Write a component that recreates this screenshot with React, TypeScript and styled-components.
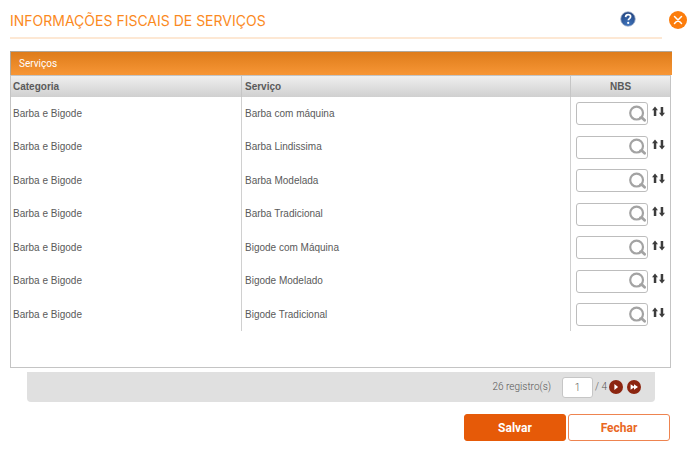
import React from "react";
import styled, { createGlobalStyle } from "styled-components";

const GlobalStyle = createGlobalStyle`
  * { box-sizing: border-box; }
  body { margin: 0; background: #fff; font-family: "Liberation Sans", Arial, sans-serif; }
`;

const Page = styled.main`
  padding: 9px 0 20px 10px;
`;

const Header = styled.header`
  display: flex;
  align-items: flex-start;
  gap: 7px;
  padding-right: 1px;
`;

const TitleBar = styled.div`
  flex: 1;
  display: flex;
  justify-content: space-between;
  align-items: flex-start;
  height: 30px;
  padding-right: 26px;
  border-bottom: 2px solid #fde8d4;
`;

const Title = styled.h1`
  margin: 0;
  font: 400 14px/24px Inter, sans-serif;
  color: #fb8a1e;
  white-space: nowrap;
`;

const IconButton = styled.button<{ $size: number }>`
  display: block;
  flex: none;
  width: ${(p) => p.$size}px;
  height: ${(p) => p.$size}px;
  padding: 0;
  border: 0;
  background: none;
  cursor: pointer;

  svg { display: block; width: 100%; height: 100%; }
`;

const HeaderButton = styled(IconButton)`
  margin-top: 2px;
`;

const Content = styled.section`
  margin: 12px 16px 0 0;
`;

const Caption = styled.h2`
  height: 24px;
  margin: 0;
  padding: 1px 8px 0;
  border: solid #b0a89c;
  border-width: 1px 0 0 1px;
  background: linear-gradient(#de7c1a, #f79636);
  color: #fff;
  font: 400 10px/22px Roboto, sans-serif;
`;

const Frame = styled.div`
  min-height: 293px;
  margin-right: 1px;
  border: 1px solid #c4c4c4;
`;

const Table = styled.table`
  width: 100%;
  border-collapse: separate;
  border-spacing: 0;
  table-layout: fixed;
  color: #5a5a5a;
  font-size: 10px;
`;

const HeadCell = styled.th<{ $width?: number; $center?: boolean }>`
  width: ${(p) => (p.$width ? `${p.$width}px` : "auto")};
  height: 21px;
  padding: 0 3px;
  border-right: 1px solid #c6c6c6;
  background: linear-gradient(#efefef, #d0d0d0);
  font-size: 10px;
  line-height: 12px;
  text-align: ${(p) => (p.$center ? "center" : "left")};

  &:first-child { padding-left: 2px; }
  &:last-child { border-right: 0; }
`;

const Row = styled.tr`
  height: 33px;

  &:nth-child(even) { height: 34px; }
`;

const Cell = styled.td`
  padding: 0 3px;
  border-right: 1px solid #d0d0d0;
  line-height: 12px;

  &:first-child { padding-left: 2px; }
  &:last-child { padding: 0 4px 0 5px; border-right: 0; }
`;

const Lookup = styled.div`
  display: flex;
  align-items: center;
  gap: 4px;
`;

const Field = styled.div`
  display: flex;
  align-items: center;
  width: 72px;
  height: 23px;
  padding-right: 1px;
  border: 1px solid #bdbdbd;
  border-radius: 3px;
  background: #fff;
`;

const FieldInput = styled.input`
  flex: 1;
  min-width: 0;
  height: 100%;
  padding: 0 4px;
  border: 0;
  outline: 0;
  background: none;
  font: inherit;
  color: inherit;
`;

const SwapButton = styled(IconButton)`
  margin-bottom: 5px;
`;

const Pager = styled.nav`
  display: flex;
  align-items: center;
  justify-content: flex-end;
  height: 30px;
  margin: 4px 17px 0 17px;
  padding-right: 14px;
  border-radius: 0 0 4px 4px;
  background: #e0e0e0;
  color: #555;
  font: 300 10px/14px Roboto, sans-serif;
`;

const PageInput = styled.input`
  width: 31px;
  height: 21px;
  margin: 0 2px 0 11px;
  padding: 0;
  border: 1px solid #c6c6c6;
  border-radius: 3px;
  background: #fff;
  color: #555;
  font: inherit;
  text-align: center;
`;

const PagerButtons = styled.div`
  display: flex;
  gap: 4px;
  margin-left: 2px;
`;

const Actions = styled.div`
  display: flex;
  justify-content: flex-end;
  gap: 2px;
  margin-top: 12px;
  padding-right: 2px;
`;

const ActionButton = styled.button<{ $primary?: boolean }>`
  width: 102px;
  height: 27px;
  padding: 0;
  border: 1px solid ${(p) => (p.$primary ? "#e65a08" : "#ee8450")};
  border-radius: 3px;
  background: ${(p) => (p.$primary ? "#e65a08" : "#fff")};
  color: ${(p) => (p.$primary ? "#fff" : "#e9681f")};
  font: 700 12px/16px Roboto, sans-serif;
  cursor: pointer;
`;

const HelpIcon = () => (
  <svg viewBox="0 0 16 16" aria-hidden="true">
    <defs>
      <radialGradient id="helpFill" cx="50%" cy="85%" r="80%">
        <stop offset="0" stopColor="#3f74bd" />
        <stop offset="1" stopColor="#234682" />
      </radialGradient>
    </defs>
    <circle cx="8" cy="8" r="7.3" fill="url(#helpFill)" stroke="#a9b8cf" strokeWidth="0.8" />
    <path d="M5.6 6.1c.1-1.7 1.1-2.4 2.5-2.4 1.5 0 2.5.8 2.5 2 0 1.8-2.3 1.9-2.3 3.6" fill="none" stroke="#fff" strokeWidth="1.7" />
    <circle cx="8.2" cy="11.9" r="1.1" fill="#fff" />
  </svg>
);

const CloseIcon = () => (
  <svg viewBox="0 0 18 18" aria-hidden="true">
    <circle cx="9" cy="9" r="9" fill="#fc7d0c" />
    <path d="M5.5 5.5l7 7M12.5 5.5l-7 7" stroke="#fff" strokeWidth="1.5" strokeLinecap="round" />
  </svg>
);

const SearchIcon = () => (
  <svg viewBox="0 0 18 18" aria-hidden="true">
    <circle cx="8.6" cy="8.1" r="6.4" fill="none" stroke="#a3a3a3" strokeWidth="2.2" />
    <path d="M12.4 12.8h1.6l2.6 2.4" fill="none" stroke="#a3a3a3" strokeWidth="2.8" strokeLinejoin="round" strokeLinecap="round" />
  </svg>
);

const SwapIcon = () => (
  <svg viewBox="0 0 13 13" aria-hidden="true">
    <path d="M3 1.500L6 5.200H4.300V11H1.800V5.200H0zM10 11.500L7 7.800h1.700V2h2.500v5.800H13z" fill="#3c3c3c" />
  </svg>
);

const NextIcon = () => (
  <svg viewBox="0 0 14 14" aria-hidden="true">
    <circle cx="7" cy="7" r="7" fill="#8c2510" />
    <path d="M5.4 4l3.7 3-3.7 3z" fill="#fff" />
  </svg>
);

const LastIcon = () => (
  <svg viewBox="0 0 14 14" aria-hidden="true">
    <circle cx="7" cy="7" r="7" fill="#8c2510" />
    <path d="M3.6 4.2L7 6.4V4.2L11 7 7 9.8V7.6L3.6 9.8z" fill="#fff" />
  </svg>
);

const services = [
  "Barba com máquina",
  "Barba Lindissima",
  "Barba Modelada",
  "Barba Tradicional",
  "Bigode com Máquina",
  "Bigode Modelado",
  "Bigode Tradicional",
].map((name) => ({ category: "Barba e Bigode", name }));

export default function App() {
  return (
    <>
      <GlobalStyle />
      <Page>
        <Header>
          <TitleBar>
            <Title>INFORMAÇÕES FISCAIS DE SERVIÇOS</Title>
            <HeaderButton $size={16} type="button" aria-label="Ajuda"><HelpIcon /></HeaderButton>
          </TitleBar>
          <HeaderButton $size={18} type="button" aria-label="Fechar janela"><CloseIcon /></HeaderButton>
        </Header>
        <Content>
          <Caption>Serviços</Caption>
          <Frame>
            <Table>
              <thead>
                <tr>
                  <HeadCell $width={231}>Categoria</HeadCell>
                  <HeadCell>Serviço</HeadCell>
                  <HeadCell $width={99} $center>NBS</HeadCell>
                </tr>
              </thead>
              <tbody>
                {services.map((service) => (
                  <Row key={service.name}>
                    <Cell>{service.category}</Cell>
                    <Cell>{service.name}</Cell>
                    <Cell>
                      <Lookup>
                        <Field>
                          <FieldInput aria-label={`NBS de ${service.name}`} />
                          <IconButton $size={18} type="button" aria-label="Pesquisar"><SearchIcon /></IconButton>
                        </Field>
                        <SwapButton $size={13} type="button" aria-label="Replicar"><SwapIcon /></SwapButton>
                      </Lookup>
                    </Cell>
                  </Row>
                ))}
              </tbody>
            </Table>
          </Frame>
          <Pager aria-label="Paginação">
            <span>26 registro(s)</span>
            <PageInput aria-label="Página" defaultValue="1" />
            <span>/ 4</span>
            <PagerButtons>
              <IconButton $size={14} type="button" aria-label="Próxima página"><NextIcon /></IconButton>
              <IconButton $size={14} type="button" aria-label="Última página"><LastIcon /></IconButton>
            </PagerButtons>
          </Pager>
          <Actions>
            <ActionButton $primary type="button">Salvar</ActionButton>
            <ActionButton type="button">Fechar</ActionButton>
          </Actions>
        </Content>
      </Page>
    </>
  );
}
